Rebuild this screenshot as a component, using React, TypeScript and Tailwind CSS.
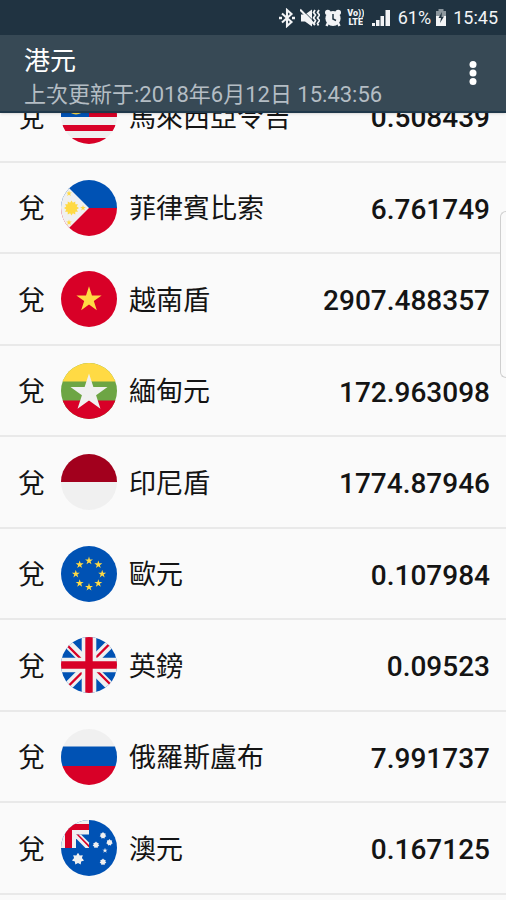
import React from "react";

type Currency = {
  name: string;
  rate: string;
  flag: React.ReactNode;
};

const STAR = "M0,-10 2.25,-3.1 9.5,-3.1 3.63,1.18 5.88,8.1 0,3.8 -5.88,8.1 -3.63,1.18 -9.5,-3.1 -2.25,-3.1Z";

const Star = ({ x, y, size, fill }: { x: number; y: number; size: number; fill: string }) => (
  <path d={STAR} fill={fill} transform={`translate(${x} ${y}) scale(${size / 10})`} />
);

// small round star with n points
const Burst = ({ x, y, r, n, inner, fill }: { x: number; y: number; r: number; n: number; inner: number; fill: string }) => {
  const points = Array.from({ length: n * 2 }, (_, i) => {
    const a = (Math.PI * i) / n - Math.PI / 2;
    const d = i % 2 ? inner : r;
    return `${x + d * Math.cos(a)},${y + d * Math.sin(a)}`;
  }).join(" ");
  return <polygon points={points} fill={fill} />;
};

const euStars = [0, 45, 90, 135, 180, 225, 270, 315];

const currencies: Currency[] = [
  {
    name: "馬來西亞令吉",
    rate: "0.508439",
    flag: (
      <>
        <rect width="56" height="56" fill="#f0f0f0" />
        <path fill="#d80027" d="M0 0h56v5H0zM0 11h56v6H0zM0 23h56v6H0zM0 37h56v6H0zM0 50h56v6H0z" />
        <rect width="28" height="29" fill="#0052b4" />
        <circle cx="15" cy="17" r="9.5" fill="#ffda44" />
        <circle cx="17.5" cy="15" r="8" fill="#0052b4" />
        <Burst x={19} y={16} r={6} inner={3} n={8} fill="#ffda44" />
      </>
    ),
  },
  {
    name: "菲律賓比索",
    rate: "6.761749",
    flag: (
      <>
        <rect width="56" height="28" fill="#0052b4" />
        <rect y="28" width="56" height="28" fill="#d80027" />
        <path fill="#f0f0f0" d="M0 0 8.5 8.5 28 28 8.5 47.5 0 56Z" />
        <Burst x={10.5} y={28} r={7.5} inner={5.4} n={12} fill="#ffda44" />
        <Star x={8} y={13.5} size={3} fill="#ffda44" />
        <Star x={8} y={42.5} size={3} fill="#ffda44" />
        <Star x={22} y={28} size={3} fill="#ffda44" />
      </>
    ),
  },
  {
    name: "越南盾",
    rate: "2907.488357",
    flag: (
      <>
        <rect width="56" height="56" fill="#d80027" />
        <Star x={28} y={28.5} size={13.3} fill="#ffda44" />
      </>
    ),
  },
  {
    name: "緬甸元",
    rate: "172.963098",
    flag: (
      <>
        <rect width="56" height="56" fill="#6da544" />
        <rect width="56" height="18.5" fill="#ffda44" />
        <rect y="37.5" width="56" height="18.5" fill="#d80027" />
        <Star x={28} y={30} size={19.5} fill="#f0f0f0" />
      </>
    ),
  },
  {
    name: "印尼盾",
    rate: "1774.87946",
    flag: (
      <>
        <rect width="56" height="56" fill="#f0f0f0" />
        <rect width="56" height="28" fill="#a2001d" />
      </>
    ),
  },
  {
    name: "歐元",
    rate: "0.107984",
    flag: (
      <>
        <rect width="56" height="56" fill="#0052b4" />
        {euStars.map((deg) => (
          <Star
            key={deg}
            x={28 + 13.2 * Math.sin((deg * Math.PI) / 180)}
            y={28 - 13.2 * Math.cos((deg * Math.PI) / 180)}
            size={4.2}
            fill="#ffda44"
          />
        ))}
      </>
    ),
  },
  {
    name: "英鎊",
    rate: "0.09523",
    flag: (
      <>
        <rect width="56" height="56" fill="#0052b4" />
        <path stroke="#f0f0f0" strokeWidth="9" d="M0 0 56 56M56 0 0 56" />
        <path stroke="#d80027" strokeWidth="2.4" d="M6.5 8.5 21 23M34 21.5 48.5 7M22 34.5 7.5 49M35 33 49.5 47.5" />
        <path stroke="#f0f0f0" strokeWidth="14.6" d="M28 0V56M0 28H56" />
        <path stroke="#d80027" strokeWidth="7.4" d="M28 0V56M0 28H56" />
      </>
    ),
  },
  {
    name: "俄羅斯盧布",
    rate: "7.991737",
    flag: (
      <>
        <rect width="56" height="56" fill="#f0f0f0" />
        <rect y="17.5" width="56" height="19.5" fill="#0052b4" />
        <rect y="37" width="56" height="19" fill="#d80027" />
      </>
    ),
  },
  {
    name: "澳元",
    rate: "0.167125",
    flag: (
      <>
        <rect width="56" height="56" fill="#0052b4" />
        <path fill="#f0f0f0" d="M0 0H28V28H0Z" />
        <path fill="#d80027" d="M4 4H28V10H11V28H4Z" />
        <path fill="#0052b4" d="M15 14.5H28V28H15Z" />
        <path fill="#f0f0f0" d="M15 14.5H20L28 22.5V28H24.5L15 18.5Z" />
        <path fill="#d80027" d="M15.5 14.5H17.5L28 25V27.5Z" />
        <Burst x={17} y={39} r={6.2} inner={4} n={7} fill="#f0f0f0" />
        <Burst x={42} y={15.5} r={3.4} inner={2.4} n={7} fill="#f0f0f0" />
        <Burst x={35} y={25} r={3.4} inner={2.4} n={7} fill="#f0f0f0" />
        <Burst x={48.5} y={22.5} r={3.4} inner={2.4} n={7} fill="#f0f0f0" />
        <Burst x={42} y={42} r={3.4} inner={2.4} n={7} fill="#f0f0f0" />
        <Star x={44} y={30.5} size={2.8} fill="#f0f0f0" />
      </>
    ),
  },
];

const StatusBar = () => (
  <div className="flex h-[35px] items-center justify-end bg-[#203341] pt-px pr-2 text-lg text-gray-100">
    <div className="mr-[7px] flex items-center gap-[5px]">
      <svg className="h-5 w-4" viewBox="0 0 16 20" fill="none" stroke="currentColor" strokeWidth="2.1">
        <path d="M3 5.5 12.5 14 8 18V2L12.5 6 3 14.5" />
        <path d="M0 10h3M13 10h3" strokeWidth="2.4" />
      </svg>
      <svg className="h-5 w-5" viewBox="0 0 20 20" fill="currentColor">
        <path d="M1 6.5h4l7-5v17l-7-5H1z" />
        <path d="M2 1.5 16 15.5" stroke="#203341" strokeWidth="1" />
        <path d="M0 1.5 15 17" stroke="currentColor" strokeWidth="2" />
        <path
          d="M15 2l-1.5 2.5 2 2.5-2 3 2 2.5-1.5 3M19 2l-1.5 2.5 2 2.5-2 3 2 2.5-2 3 1 2"
          fill="none"
          stroke="currentColor"
          strokeWidth="1.7"
        />
      </svg>
      <svg className="h-5 w-4" viewBox="0 0 16 20" fill="currentColor">
        <circle cx="8" cy="10.5" r="7.6" />
        <circle cx="2.8" cy="4.5" r="2.8" />
        <circle cx="13.2" cy="4.5" r="2.8" />
        <path d="M3.5 14 1.5 18M12.5 14l2 4" stroke="currentColor" strokeWidth="2.5" />
        <path d="M8 6v5l3 1.5" fill="none" stroke="#203341" strokeWidth="1.5" />
      </svg>
      <span className="flex w-5 flex-col items-center text-[9px] leading-[9px] font-black">
        <span className="h-[9px] overflow-hidden">Vo))</span>
        <span className="h-[9px] overflow-hidden">LTE</span>
      </span>
      <svg className="h-5 w-5" viewBox="0 0 20 20" fill="currentColor">
        <path d="M1 18v-3h3v3zM5 18v-6h3.5v6zM9.5 18V8H13v10zM14.5 18V2H19v16z" />
      </svg>
    </div>
    <span>61%</span>
    <svg className="mr-1.5 ml-1 h-5 w-3" viewBox="0 0 12 20">
      <path d="M3.5 1h5v2H11v5H1V3h2.5z" fill="#8b969d" />
      <path d="M1 8h10v10H1z" fill="#f3f4f6" />
      <path d="M7 4 3.5 10H6l-1 5 4-6.5H6.5z" fill="#203341" />
    </svg>
    <span>15:45</span>
  </div>
);

const CurrencyRow = ({ name, rate, flag }: Currency) => (
  <li className="flex h-[91px] items-center border-b-2 border-[#e9e9e9] pr-4 pl-[18px] odd:h-[92px]">
    <span className="pt-1 text-[27px]">兌</span>
    <svg className="mr-3 ml-4 size-14 shrink-0 rounded-full" viewBox="0 0 56 56" aria-hidden="true">
      {flag}
    </svg>
    <span className="pt-1 text-[27px]">{name}</span>
    <span className="ml-auto pt-1 text-[28px] font-medium">{rate}</span>
  </li>
);

const App: React.FC = () => {
  return (
    <div className="relative min-h-screen bg-[#fafafa] font-[Roboto,'Noto_Sans_CJK_TC',sans-serif] text-[#141414]">
      <header className="relative z-10 shadow">
        <StatusBar />
        <div className="flex h-[78px] items-center justify-between border-b-2 border-[#20384a] bg-[#374955] pr-[21px] pl-6">
          <div className="pt-2">
            <h1 className="text-[26px] leading-9 text-white">港元</h1>
            <p className="text-[22px] leading-8 text-[#b4bdc4]">上次更新于:2018年6月12日 15:43:56</p>
          </div>
          <button aria-label="選單" className="text-white">
            <svg className="h-7 w-6" viewBox="0 0 24 28" fill="currentColor">
              <circle cx="12" cy="5.5" r="3.5" />
              <circle cx="12" cy="14" r="3.5" />
              <circle cx="12" cy="22.5" r="3.5" />
            </svg>
          </button>
        </div>
      </header>

      {/* list is scrolled a little, first row is cut by the header */}
      <main className="overflow-hidden">
        <ul className="-mt-[42px]">
          {currencies.map((c) => (
            <CurrencyRow key={c.name} {...c} />
          ))}
        </ul>
      </main>

      {/* fast scroll handle */}
      <div className="absolute top-[211px] right-0 h-[167px] w-[6px] rounded-l-md border border-r-0 border-[#cfcfcf] bg-[#fafafa]" />
    </div>
  );
};

export default App;
